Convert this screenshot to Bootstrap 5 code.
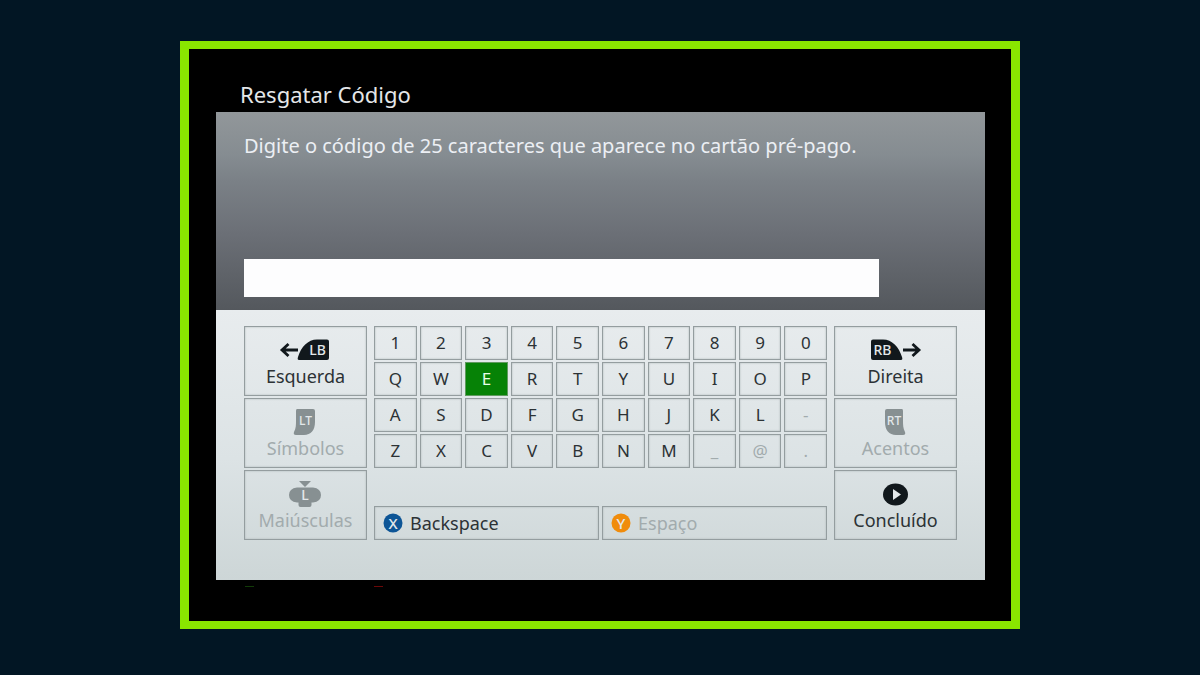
<!DOCTYPE html>
<html lang="pt-BR">
<head>
<meta charset="utf-8">
<meta name="viewport" content="width=device-width, initial-scale=1">
<title>Resgatar Código</title>
<link rel="stylesheet" href="https://cdn.jsdelivr.net/npm/bootstrap@5.3.0/dist/css/bootstrap.min.css">
<style>
  body { background: #021624; font-family: "Noto Sans", "Open Sans", sans-serif; padding-bottom: 6px; }
  .screen { width: 70%; background: #000; border: solid #8ae600; border-width: 8px 9px; padding: 0 26px 0 27px; }
  .screen-title { color: #e4e6e8; font-size: 22px; line-height: 28px; padding: 31px 24px 4px; }
  .prompt { background: linear-gradient(#92979a, #858c91 22%, #7b8187 34%, #6b6f76 62%, #54585d); padding: 20px 28px 13px; }
  .prompt label { color: #eceff4; font-size: 20px; line-height: 28px; margin-bottom: 99px; }
  .code-field { width: 89%; height: 38px; background: #fdfdfe; border: 0; }
  .keyboard { background: linear-gradient(#e8ecee, #dce3e5 55%, #cdd6d7); padding: 16px 28px 40px; gap: 7px; }
  .side-keys { flex: 0 0 17.25%; gap: 2px; }
  .keys { gap: 2px; }
  .key-row { gap: 3px; }
  .key {
    --bs-btn-color: #2c3235; --bs-btn-border-color: #949d9f; --bs-btn-border-radius: 0;
    --bs-btn-hover-color: #fff; --bs-btn-hover-bg: #068206; --bs-btn-hover-border-color: #5f9a5f;
    --bs-btn-active-color: #e9ffe9; --bs-btn-active-bg: #068206; --bs-btn-active-border-color: #5f9a5f;
    --bs-btn-disabled-color: #a2abad; --bs-btn-disabled-border-color: #949d9f; --bs-btn-disabled-opacity: 1;
    --bs-btn-padding-x: 0; --bs-btn-padding-y: 0; --bs-btn-font-size: 18px; --bs-btn-line-height: 24px;
    min-width: 0; box-shadow: inset 0 0 2px #a8b1b3;
  }
  .key.active { box-shadow: none; }
  .char-key { --bs-btn-font-size: 17px; flex: 1 1 0; height: 34px; }
  .side-key { height: 70px; padding: 9px 0 0; }
  .wide-key { flex: 1 1 0; height: 34px; padding: 0 8px; gap: 7px; }
  .glyph { color: #11181c; }
  .key:disabled .glyph { color: #879092; }
  .glyph text { font-family: "Noto Sans", sans-serif; font-weight: 500; fill: #e3e8ea; text-anchor: middle; }
  .hints { padding: 6px 29px 34px; gap: 120px; }
  .hint { width: 9px; height: 1px; background: #123c08; }
  .hint-red { background: #6c0808; }
</style>
</head>
<body class="min-vh-100 d-flex align-items-center justify-content-center">
<main class="screen">
  <h1 class="screen-title m-0 fw-normal">Resgatar Código</h1>
  <form>
    <div class="prompt">
      <label for="code" class="d-block">Digite o código de 25 caracteres que aparece no cartão pré-pago.</label>
      <input id="code" class="code-field d-block px-2" type="text" maxlength="25" autocomplete="off">
    </div>
    <div class="keyboard d-flex">
      <div class="side-keys d-flex flex-column">
        <button type="button" class="btn key side-key d-flex flex-column align-items-center">
          <svg class="glyph" width="52" height="28" viewBox="0 0 52 28" aria-hidden="true">
            <path d="M9.500 8 3 14l6.500 6M3 14h16" fill="none" stroke="currentColor" stroke-width="2.800"/>
            <path d="M20 24Q18 24 19 21C22 11 29 3.500 38 3.500H48Q50 3.500 50 5.500V22Q50 24 48 24Z" fill="currentColor"/>
            <text x="38.500" y="19" font-size="14">LB</text>
          </svg>
          <span>Esquerda</span>
        </button>
        <button type="button" class="btn key side-key d-flex flex-column align-items-center" disabled>
          <svg class="glyph" width="24" height="28" viewBox="0 0 24 28" aria-hidden="true">
            <path d="M4 1H20Q22 1 22 3V14C22 22 18 27 11 27H3Q0 27 1 24C3 20 3 17 3 12V3Q3 1 4 1Z" fill="currentColor"/>
            <text x="12.500" y="17" font-size="12">LT</text>
          </svg>
          <span>Símbolos</span>
        </button>
        <button type="button" class="btn key side-key d-flex flex-column align-items-center" disabled>
          <svg class="glyph" width="34" height="28" viewBox="0 0 34 28" aria-hidden="true">
            <path d="M11 1H23L17 7ZM9 7.500H25Q33 8.500 33 15Q33 21.500 25 22.500H23.500V25Q23.500 27 21.500 27H12.500Q10.500 27 10.500 25V22.500H9Q1 21.500 1 15Q1 8.500 9 7.500Z" fill="currentColor"/>
            <text x="17" y="20" font-size="14">L</text>
          </svg>
          <span>Maiúsculas</span>
        </button>
      </div>

      <div class="keys d-flex flex-column flex-fill">
        <div class="key-row d-flex">
          <button type="button" class="btn key char-key">1</button>
          <button type="button" class="btn key char-key">2</button>
          <button type="button" class="btn key char-key">3</button>
          <button type="button" class="btn key char-key">4</button>
          <button type="button" class="btn key char-key">5</button>
          <button type="button" class="btn key char-key">6</button>
          <button type="button" class="btn key char-key">7</button>
          <button type="button" class="btn key char-key">8</button>
          <button type="button" class="btn key char-key">9</button>
          <button type="button" class="btn key char-key">0</button>
        </div>
        <div class="key-row d-flex">
          <button type="button" class="btn key char-key">Q</button>
          <button type="button" class="btn key char-key">W</button>
          <button type="button" class="btn key char-key active">E</button>
          <button type="button" class="btn key char-key">R</button>
          <button type="button" class="btn key char-key">T</button>
          <button type="button" class="btn key char-key">Y</button>
          <button type="button" class="btn key char-key">U</button>
          <button type="button" class="btn key char-key">I</button>
          <button type="button" class="btn key char-key">O</button>
          <button type="button" class="btn key char-key">P</button>
        </div>
        <div class="key-row d-flex">
          <button type="button" class="btn key char-key">A</button>
          <button type="button" class="btn key char-key">S</button>
          <button type="button" class="btn key char-key">D</button>
          <button type="button" class="btn key char-key">F</button>
          <button type="button" class="btn key char-key">G</button>
          <button type="button" class="btn key char-key">H</button>
          <button type="button" class="btn key char-key">J</button>
          <button type="button" class="btn key char-key">K</button>
          <button type="button" class="btn key char-key">L</button>
          <button type="button" class="btn key char-key" disabled>-</button>
        </div>
        <div class="key-row d-flex">
          <button type="button" class="btn key char-key">Z</button>
          <button type="button" class="btn key char-key">X</button>
          <button type="button" class="btn key char-key">C</button>
          <button type="button" class="btn key char-key">V</button>
          <button type="button" class="btn key char-key">B</button>
          <button type="button" class="btn key char-key">N</button>
          <button type="button" class="btn key char-key">M</button>
          <button type="button" class="btn key char-key" disabled>_</button>
          <button type="button" class="btn key char-key" disabled>@</button>
          <button type="button" class="btn key char-key" disabled>.</button>
        </div>
        <div class="key-row d-flex mt-auto">
          <button type="button" class="btn key wide-key d-flex align-items-center">
            <svg class="glyph" width="20" height="20" viewBox="0 0 20 20" aria-hidden="true">
              <circle cx="10" cy="10" r="9.500" fill="#0d5596"/>
              <text x="10" y="15.500" font-size="15">X</text>
            </svg>
            <span>Backspace</span>
          </button>
          <button type="button" class="btn key wide-key d-flex align-items-center" disabled>
            <svg class="glyph" width="20" height="20" viewBox="0 0 20 20" aria-hidden="true">
              <circle cx="10" cy="10" r="9.500" fill="#f08c0c"/>
              <text x="10" y="15.500" font-size="15">Y</text>
            </svg>
            <span>Espaço</span>
          </button>
        </div>
      </div>

      <div class="side-keys d-flex flex-column">
        <button type="button" class="btn key side-key d-flex flex-column align-items-center">
          <svg class="glyph" width="52" height="28" viewBox="0 0 52 28" aria-hidden="true">
            <path d="M42.500 8 49 14l-6.500 6M49 14H33" fill="none" stroke="currentColor" stroke-width="2.800"/>
            <path d="M31 24Q33 24 32 21C29 11 22 3.500 13 3.500H3Q1 3.500 1 5.500V22Q1 24 3 24Z" fill="currentColor"/>
            <text x="12.500" y="19" font-size="14">RB</text>
          </svg>
          <span>Direita</span>
        </button>
        <button type="button" class="btn key side-key d-flex flex-column align-items-center" disabled>
          <svg class="glyph" width="24" height="28" viewBox="0 0 24 28" aria-hidden="true">
            <path d="M18 1H3Q1 1 1 3V14C1 22 5 27 12 27H19Q22 27 21 24C19 20 19 17 19 12V3Q19 1 18 1Z" fill="currentColor"/>
            <text x="10" y="17" font-size="12">RT</text>
          </svg>
          <span>Acentos</span>
        </button>
        <button type="button" class="btn key side-key d-flex flex-column align-items-center">
          <svg class="glyph" width="28" height="28" viewBox="0 0 28 28" aria-hidden="true">
            <ellipse cx="13.500" cy="14.500" rx="12.500" ry="11" fill="currentColor"/>
            <path d="M11 9 19 14.500 11 20Z" fill="#e3e8ea"/>
          </svg>
          <span>Concluído</span>
        </button>
      </div>
    </div>
  </form>
  <div class="hints d-flex" aria-hidden="true">
    <span class="hint"></span>
    <span class="hint hint-red"></span>
  </div>
</main>
<script src="https://cdn.jsdelivr.net/npm/bootstrap@5.3.0/dist/js/bootstrap.bundle.min.js"></script>
</body>
</html>
